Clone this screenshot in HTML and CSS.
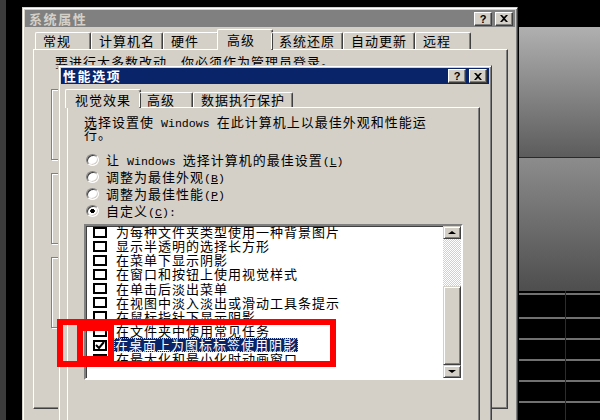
FILE: index.html
```html
<!DOCTYPE html>
<html lang="zh-CN">
<head>
    <meta charset="UTF-8">
    <title>性能选项</title>
    <link rel="stylesheet" href="styles.css">
</head>
<body>
    <div class="desk-left"></div>
    <div class="desk-right">
        <div class="slab"></div>
        <div class="slab dark"></div>
        <div class="grid"></div>
    </div>

    <div class="win sys">
        <div class="title inactive">
            <span class="caption">系统属性</span>
            <span class="tbtn">?</span>
            <span class="tbtn"><svg width="8" height="7" viewBox="0 0 8 7"><path d="M0 0h2l2 2 2-2h2L5 3.5 8 7H6L4 5 2 7H0l3-3.5z" fill="#000"/></svg></span>
        </div>
        <div class="tabs">
            <div class="tab">常规</div>
            <div class="tab">计算机名</div>
            <div class="tab">硬件</div>
            <div class="tab on">高级</div>
            <div class="tab">系统还原</div>
            <div class="tab">自动更新</div>
            <div class="tab">远程</div>
        </div>
        <div class="panel">
            <p class="note">要进行大多数改动，你必须作为管理员登录。</p>
            <div class="group"></div>
            <div class="group"></div>
            <div class="group"></div>
        </div>
    </div>

    <div class="win perf">
        <div class="title">
            <span class="caption">性能选项</span>
            <span class="tbtn">?</span>
            <span class="tbtn"><svg width="8" height="7" viewBox="0 0 8 7"><path d="M0 0h2l2 2 2-2h2L5 3.5 8 7H6L4 5 2 7H0l3-3.5z" fill="#000"/></svg></span>
        </div>
        <div class="tabs small">
            <div class="tab on">视觉效果</div>
            <div class="tab">高级</div>
            <div class="tab">数据执行保护</div>
        </div>
        <div class="panel inner">
            <p class="desc">选择设置使<span class="en"> Windows </span>在此计算机上以最佳外观和性能运<br>行。</p>
            <div class="options">
                <label class="opt"><span class="radio"></span><span class="lbl">让<span class="en"> Windows </span>选择计算机的最佳设置<span class="en">(<u>L</u>)</span></span></label>
                <label class="opt"><span class="radio"></span><span class="lbl">调整为最佳外观<span class="en">(<u>B</u>)</span></span></label>
                <label class="opt"><span class="radio"></span><span class="lbl">调整为最佳性能<span class="en">(<u>P</u>)</span></span></label>
                <label class="opt"><span class="radio checked"></span><span class="lbl">自定义<span class="en">(<u>C</u>):</span></span></label>
            </div>
            <div class="listbox">
                <ul class="items">
                    <li><span class="check"></span><span>为每种文件夹类型使用一种背景图片</span></li>
                    <li><span class="check"></span><span>显示半透明的选择长方形</span></li>
                    <li><span class="check"></span><span>在菜单下显示阴影</span></li>
                    <li><span class="check"></span><span>在窗口和按钮上使用视觉样式</span></li>
                    <li><span class="check"></span><span>在单击后淡出菜单</span></li>
                    <li><span class="check"></span><span>在视图中淡入淡出或滑动工具条提示</span></li>
                    <li><span class="check"></span><span>在鼠标指针下显示阴影</span></li>
                    <li><span class="check"></span><span>在文件夹中使用常见任务</span></li>
                    <li><span class="check checked"><svg width="10" height="8" viewBox="0 0 10 8"><path d="M1 4l3 3 5-6" fill="none" stroke="#000" stroke-width="2"/></svg></span><span class="sel">在桌面上为图标标签使用阴影</span></li>
                    <li><span class="check"></span><span>在最大化和最小化时动画窗口</span></li>
                </ul>
                <div class="scroll">
                    <div class="sbtn"><i class="arrow up"></i></div>
                    <div class="track"></div>
                    <div class="thumb"></div>
                    <div class="sbtn"><i class="arrow down"></i></div>
                </div>
            </div>
        </div>
    </div>

    <div class="mark big"></div>
    <div class="mark small"></div>
</body>
</html>
```

FILE: styles.css
```css
body {
    margin: 0;
    width: 600px;
    height: 420px;
    overflow: hidden;
    position: relative;
    background-color: #000;
    font-family: "Noto Sans CJK SC", sans-serif;
    font-size: 13px;
    letter-spacing: 1px;
    color: #000;
}
p {
    margin: 0;
}
.en {
    font-family: "Liberation Mono", monospace;
    font-size: 11.6px;
    line-height: 0;
    letter-spacing: 0;
    white-space: pre;
}

/* desktop behind the dialogs */
.desk-left {
    position: absolute;
    left: 0;
    top: 0;
    width: 6px;
    height: 420px;
    background-color: #3c3c3c;
}
.desk-right {
    position: absolute;
    left: 519px;
    top: 27px;
    width: 81px;
    bottom: 0;
    display: flex;
    flex-direction: column;
}
.slab {
    height: 130px;
    background: linear-gradient(#b0b0b0, #5c5c5c);
    border-bottom: 1px solid #2a2a2a;
}
.slab.dark {
    height: 133px;
    border-bottom: none;
    background: linear-gradient(#8c8c8c, #4e4e4e);
}
.grid {
    flex: 1;
    background:
        linear-gradient(to right, transparent 46px, #2c2c2c 46px 47px, transparent 47px),
        repeating-linear-gradient(to bottom, transparent 0 19px, #707070 19px 21px);
    background-position: 0 0, 0 7px;
    background-color: #000;
}

/* classic windows */
.win {
    position: absolute;
    box-sizing: border-box;
    padding: 2px;
    background-color: #d4d0c8;
    border: 1px solid;
    border-color: #d4d0c8 #404040 #404040 #d4d0c8;
    box-shadow: inset 1px 1px #fff, inset -1px -1px #808080;
}
.sys {
    left: 22px;
    top: 7px;
    width: 496px;
    height: 430px;
}
.perf {
    left: 58px;
    top: 65px;
    width: 434px;
    height: 370px;
}
.title {
    display: flex;
    align-items: center;
    gap: 2px;
    height: 16px;
    padding: 0 2px;
    background-color: #0a246a;
    color: #fff;
}
.title.inactive {
    height: 17px;
    background-color: #808080;
    color: #d4d0c8;
}
.caption {
    flex: 1;
    font-weight: bold;
    letter-spacing: 1.6px;
    line-height: 16px;
}
.inactive .caption {
    padding-left: 2px;
}
.tbtn {
    width: 16px;
    height: 12px;
    display: flex;
    justify-content: center;
    align-items: center;
    background-color: #d4d0c8;
    border: 1px solid;
    border-color: #fff #404040 #404040 #fff;
    box-shadow: inset -1px -1px #808080;
    color: #000;
    font-family: "Liberation Sans", sans-serif;
    font-weight: bold;
    font-size: 11px;
    letter-spacing: 0;
}
.tbtn + .tbtn {
    margin-left: 1px;
}

/* tabs */
.tabs {
    display: flex;
    align-items: flex-end;
    height: 20px;
    margin-top: 2px;
    padding-left: 10px;
    position: relative;
    z-index: 1;
}
.tab {
    box-sizing: border-box;
    min-width: 56px;
    height: 17px;
    padding: 0 7px;
    line-height: 16px;
    border-top: 1px solid #fff;
    border-left: 1px solid #fff;
    border-right: 1px solid #404040;
    box-shadow: inset -1px 0 #808080;
    border-top-left-radius: 2px;
    border-top-right-radius: 2px;
    white-space: nowrap;
}
.tab.on {
    height: 21px;
    margin: 0 -2px -1px;
    padding: 2px 9px 0;
    background-color: #d4d0c8;
}
.tabs.small {
    height: 18px;
    margin-top: 5px;
    padding-left: 6px;
}
.tabs.small .tab {
    min-width: 54px;
    height: 15px;
    line-height: 13px;
}
.tabs.small .tab.on {
    height: 19px;
    padding-top: 3px;
}
.panel {
    box-sizing: border-box;
    height: 360px;
    margin-left: 8px;
    width: 475px;
    padding: 5px 17px 0;
    border: 1px solid;
    border-color: #fff #404040 #404040 #fff;
    box-shadow: inset -1px -1px #808080;
}
.note {
    margin-left: 4px;
    line-height: 14px;
    white-space: nowrap;
}
.group {
    height: 69px;
    margin-top: 13px;
    border: 1px solid #808080;
    box-shadow: 1px 1px #fff, inset 1px 1px #fff;
}
.note + .group {
    margin-top: 20px;
}

/* performance options page */
.panel.inner {
    width: 413px;
    height: 340px;
    margin-left: 6px;
    padding: 8px 16px 0;
}
.desc {
    line-height: 12px;
    white-space: nowrap;
}
.options {
    margin-top: 11px;
}
.opt {
    display: flex;
    align-items: center;
    height: 17px;
    white-space: nowrap;
}
.lbl {
    line-height: 14px;
}
.radio {
    box-sizing: border-box;
    width: 13px;
    height: 12px;
    margin: 0 7px 0 2px;
    border-radius: 50%;
    background-color: #fff;
    border: 1px solid;
    border-color: #808080 #fff #fff #808080;
    box-shadow: inset 1px 1px #404040, inset -1px -1px #d4d0c8;
}
.radio.checked {
    background: radial-gradient(circle, #000 0 2px, #fff 2.5px);
}
.listbox {
    box-sizing: border-box;
    display: flex;
    width: 379px;
    height: 156px;
    margin-top: 5px;
    background-color: #fff;
    border: 2px solid;
    border-color: #808080 #fff #fff #808080;
    box-shadow: inset 1px 1px #404040;
}
.items {
    flex: 1;
    list-style: none;
    margin: -1px 0 0;
    padding: 0;
}
.items li {
    display: flex;
    align-items: center;
    height: 14.15px;
    line-height: 14px;
    white-space: nowrap;
}
.check {
    box-sizing: border-box;
    width: 14px;
    height: 11px;
    margin: 0 9px 0 7px;
    border: 2px solid #000;
    background-color: #fff;
    display: flex;
    justify-content: center;
    align-items: center;
}
.sel {
    margin-left: -2px;
    padding: 0 1px;
    background-color: #0a246a;
    color: #fff;
    outline: 1px dotted #d8c880;
    outline-offset: -1px;
}
.scroll {
    width: 18px;
    display: flex;
    flex-direction: column;
}
.sbtn {
    box-sizing: border-box;
    height: 13px;
    display: flex;
    justify-content: center;
    align-items: center;
    background-color: #d4d0c8;
    border: 1px solid;
    border-color: #d4d0c8 #404040 #404040 #d4d0c8;
    box-shadow: inset 1px 1px #fff, inset -1px -1px #808080;
}
.track {
    height: 47px;
    background: repeating-conic-gradient(#d4d0c8 0 25%, #fff 0 50%) 0 0 / 2px 2px;
}
.thumb {
    box-sizing: border-box;
    flex: 1;
    background-color: #d4d0c8;
    border: 1px solid;
    border-color: #d4d0c8 #404040 #404040 #d4d0c8;
    box-shadow: inset 1px 1px #fff, inset -1px -1px #808080;
}
.arrow {
    width: 0;
    height: 0;
    border-left: 4px solid transparent;
    border-right: 4px solid transparent;
}
.arrow.up {
    border-bottom: 3px solid #000;
}
.arrow.down {
    border-top: 3px solid #000;
}

/* red highlight boxes drawn over the screenshot */
.mark {
    position: absolute;
    box-sizing: border-box;
    border: 6px solid #f00;
    z-index: 5;
}
.mark.big {
    left: 57px;
    top: 319px;
    width: 279px;
    height: 48px;
}
.mark.small {
    left: 77px;
    top: 325px;
    width: 37px;
    height: 37px;
}
```
